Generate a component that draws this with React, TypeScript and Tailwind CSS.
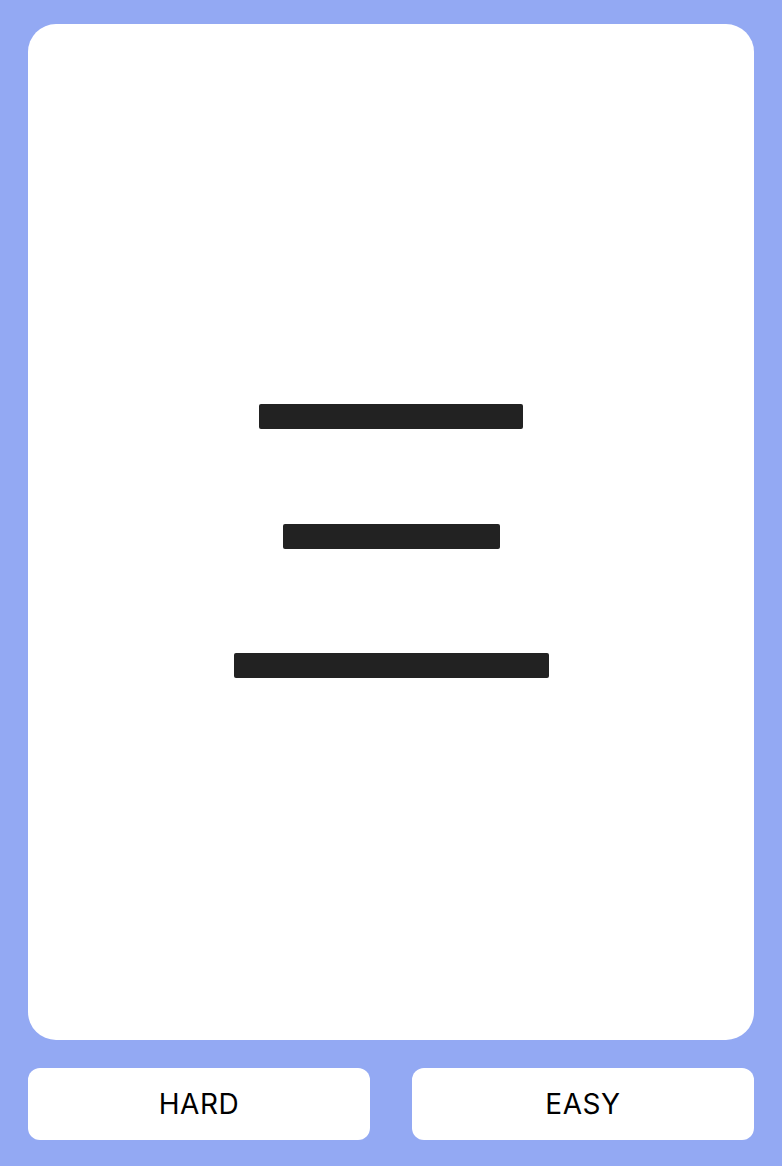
export default function App() {
  return (
    <div className="flex flex-col h-[1166px] bg-[#93a9f3] px-[28px] pt-[24px] pb-[26px]" style={{ fontFamily: "Inter, 'Noto Sans', sans-serif" }}>
      <div className="flex-1 flex flex-col items-center justify-center bg-white rounded-[28px] pt-[18px]">
        <div className="w-[264px] h-[25px] bg-[#222222] rounded-[2px]" />
        <div className="w-[217px] h-[25px] bg-[#222222] rounded-[2px] mt-[95px]" />
        <div className="w-[315px] h-[25px] bg-[#222222] rounded-[2px] mt-[104px]" />
      </div>

      <div className="flex gap-[42px] mt-[28px]">
        <button className="flex-1 h-[72px] bg-white rounded-[12px] text-[28px] text-black tracking-[0.02em]">
          HARD
        </button>
        <button className="flex-1 h-[72px] bg-white rounded-[12px] text-[28px] text-black tracking-[0.02em]">
          EASY
        </button>
      </div>
    </div>
  );
}
